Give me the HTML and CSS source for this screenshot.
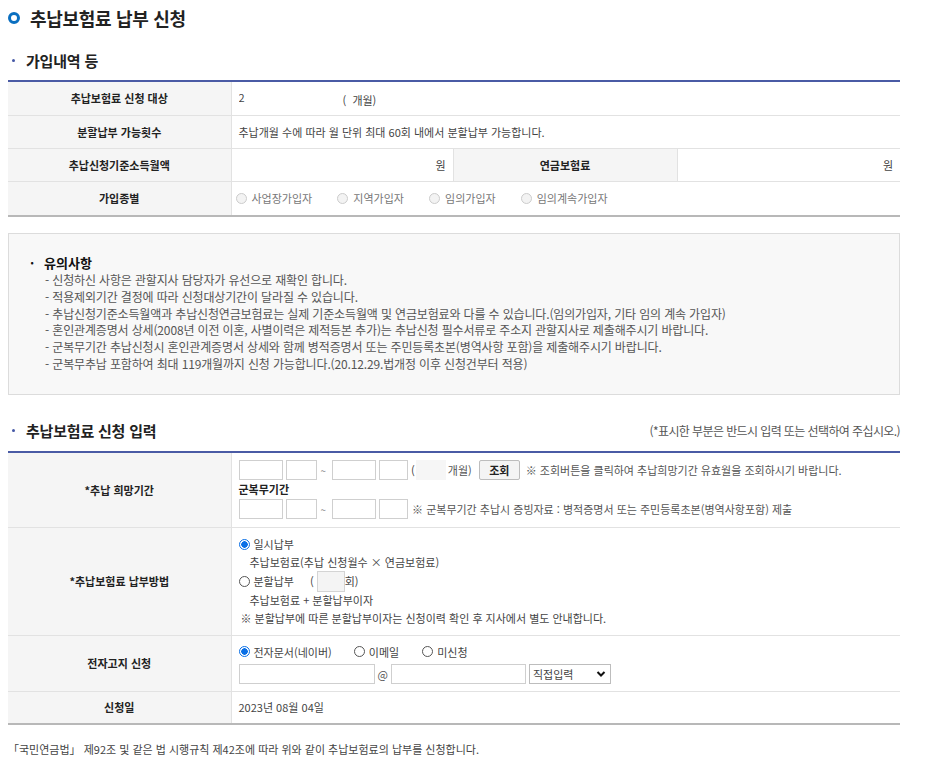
FILE: index.html
```html
<!DOCTYPE html>
<html lang="ko">
<head>
<meta charset="utf-8">
<title>추납보험료 납부 신청</title>
<link rel="stylesheet" href="styles.css">
</head>
<body>
<div class="page">
  <h1 class="title"><span class="ring"></span>추납보험료 납부 신청</h1>

  <h2 class="sec"><span class="dot"></span>가입내역 등</h2>
  <table class="grid t1">
    <colgroup><col class="c1"><col class="c2"><col class="c3"><col class="c4"></colgroup>
    <tr class="r34"><th>추납보험료 신청 대상</th><td colspan="3"><span class="mask">2</span><span class="gap1"></span>(&nbsp;&nbsp;개월)</td></tr>
    <tr class="r33"><th>분할납부 가능횟수</th><td colspan="3">추납개월 수에 따라 월 단위 최대 60회 내에서 분할납부 가능합니다.</td></tr>
    <tr class="r33"><th>추납신청기준소득월액</th><td class="right">원</td><th>연금보험료</th><td class="right">원</td></tr>
    <tr class="r35 last"><th>가입종별</th><td colspan="3">
      <span class="opt dim first"><span class="radio off"></span>사업장가입자</span>
      <span class="opt dim"><span class="radio off"></span>지역가입자</span>
      <span class="opt dim"><span class="radio off"></span>임의가입자</span>
      <span class="opt dim"><span class="radio off"></span>임의계속가입자</span>
    </td></tr>
  </table>

  <div class="notice">
    <div class="ntitle"><span class="ndot">·</span>유의사항</div>
    <ul class="nlist">
      <li>- 신청하신 사항은 관할지사 담당자가 유선으로 재확인 합니다.</li>
      <li>- 적용제외기간 결정에 따라 신청대상기간이 달라질 수 있습니다.</li>
      <li>- 추납신청기준소득월액과 추납신청연금보험료는 실제 기준소득월액 및 연금보험료와 다를 수 있습니다.(임의가입자, 기타 임의 계속 가입자)</li>
      <li>- 혼인관계증명서 상세(2008년 이전 이혼, 사별이력은 제적등본 추가)는 추납신청 필수서류로 주소지 관할지사로 제출해주시기 바랍니다.</li>
      <li>- 군복무기간 추납신청시 혼인관계증명서 상세와 함께 병적증명서 또는 주민등록초본(병역사항 포함)을 제출해주시기 바랍니다.</li>
      <li>- 군복무추납 포함하여 최대 119개월까지 신청 가능합니다.(20.12.29.법개정 이후 신청건부터 적용)</li>
    </ul>
  </div>

  <div class="sechead">
    <h2 class="sec"><span class="dot"></span>추납보험료 신청 입력</h2>
    <span class="req">(*표시한 부분은 반드시 입력 또는 선택하여 주십시오.)</span>
  </div>
  <table class="grid t2">
    <colgroup><col class="c1"><col></colgroup>
    <tr class="r73"><th>*추납 희망기간</th><td>
      <div class="line">
        <span class="inp w44"></span><span class="inp w31"></span><span class="tilde">~</span><span class="inp w44"></span><span class="inp w29"></span>
        <span class="paren">(</span><span class="graybox"></span><span class="mon">개월)</span>
        <span class="btn">조회</span>
        <span class="hint">※ 조회버튼을 클릭하여 추납희망기간 유효월을 조회하시기 바랍니다.</span>
      </div>
      <div class="sub">군복무기간</div>
      <div class="line">
        <span class="inp w44"></span><span class="inp w31"></span><span class="tilde">~</span><span class="inp w44"></span><span class="inp w29"></span>
        <span class="hint h2">※ 군복무기간 추납시 증빙자료 : 병적증명서 또는 주민등록초본(병역사항포함) 제출</span>
      </div>
    </td></tr>
    <tr class="r109"><th>*추납보험료 납부방법</th><td>
      <div class="pline"><span class="radio on"></span>일시납부</div>
      <div class="pline ind">추납보험료(추납 신청월수 × 연금보험료)</div>
      <div class="pline tall"><span class="radio blank"></span>분할납부<span class="paren2">(</span><span class="cntbox"></span>회)</div>
      <div class="pline ind">추납보험료 + 분할납부이자</div>
      <div class="pline note">※ 분할납부에 따른 분할납부이자는 신청이력 확인 후 지사에서 별도 안내합니다.</div>
    </td></tr>
    <tr class="r56"><th>전자고지 신청</th><td>
      <div class="eline">
        <span class="opt e1"><span class="radio on"></span>전자문서(네이버)</span>
        <span class="opt e2"><span class="radio blank"></span>이메일</span>
        <span class="opt"><span class="radio blank"></span>미신청</span>
      </div>
      <div class="mline">
        <span class="inp w136"></span><span class="at">@</span><span class="inp w135"></span>
        <span class="sel">직접입력<svg class="chev" width="10" height="8" viewBox="0 0 10 8"><path d="M1.5 2 L5 5.5 L8.5 2" fill="none" stroke="#111" stroke-width="2"/></svg></span>
      </div>
    </td></tr>
    <tr class="r33 last"><th>신청일</th><td>2023년 08월 04일</td></tr>
  </table>

  <p class="foot">「국민연금법」 제92조 및 같은 법 시행규칙 제42조에 따라 위와 같이 추납보험료의 납부를 신청합니다.</p>
</div>
</body>
</html>
```

FILE: styles.css
```css
* { box-sizing: border-box; }
body {
  margin: 8px;
  font-family: "Noto Sans CJK KR", "Noto Sans", sans-serif;
  font-size: 11px;
  color: #333;
  background: #fff;
}
.page { width: 892px; }

.title {
  display: flex;
  align-items: center;
  gap: 10px;
  margin: 0;
  height: 20px;
  font-size: 18px;
  font-weight: 700;
  color: #222;
  letter-spacing: -0.3px;
}
.ring {
  width: 12px;
  height: 12px;
  border: 3px solid #0a6fc0;
  border-radius: 50%;
}

.sec {
  display: flex;
  align-items: center;
  margin: 0;
  font-size: 15px;
  font-weight: 700;
  color: #222;
  letter-spacing: -0.2px;
}
.dot {
  width: 3px;
  height: 3px;
  border-radius: 50%;
  background: #4558a6;
  margin: 0 11px 0 4px;
}
.page > .sec { margin-top: 22px; height: 20px; }

.grid {
  width: 892px;
  border-collapse: collapse;
  table-layout: fixed;
  border-top: 2px solid #4a5ba5;
}
.t1 { margin-top: 10px; }
.c1 { width: 223px; }
.c2 { width: 222px; }
.c3 { width: 224px; }
.c4 { width: 223px; }
.grid th {
  background: #f5f5f5;
  font-weight: 700;
  color: #222;
  text-align: center;
  border-bottom: 1px solid #e2e2e2;
  border-right: 1px solid #e2e2e2;
  padding: 0;
}
.grid td {
  border-bottom: 1px solid #e2e2e2;
  padding: 0 7px;
  color: #444;
  vertical-align: middle;
}
.grid tr.last th, .grid tr.last td { border-bottom: 2px solid #b8b8b8; }
.r34 { height: 34px; }
.r35 { height: 35px; }
.r33 { height: 33px; }
.r73 { height: 75px; }
.r109 { height: 108px; }
.r56 { height: 56px; }
.right { text-align: right; border-right: 1px solid #e2e2e2; }
.grid td.right:last-child { border-right: 0; }
.mask { display: inline-block; width: 8px; overflow: hidden; }
.gap1 { display: inline-block; width: 96px; }

.opt { display: inline-flex; align-items: center; margin-right: 22px; }
.dim { color: #777; }
.first { margin-left: -3px; }
.radio {
  display: inline-block;
  width: 11px;
  height: 11px;
  border-radius: 50%;
  border: 1px solid #333;
  margin-right: 4px;
  flex: none;
}
.dim .radio { margin-right: 5px; }
.radio.off { border-color: #ccc; background: #f3f3f3; }
.radio.blank { border-color: #555; background: #fff; }
.radio.on {
  border: 1px solid #0a6fe6;
  background: radial-gradient(circle, #0a6fe6 0 3px, #fff 3.5px);
}

.notice {
  margin-top: 16px;
  height: 162px;
  background: #f8f8f8;
  border: 1px solid #dcdcdc;
  padding: 20px 0 0 21px;
  font-size: 12px;
}
.ntitle {
  font-size: 13px;
  font-weight: 700;
  color: #111;
  line-height: 18px;
}
.ndot { display: inline-block; width: 14px; font-weight: 700; }
.nlist {
  list-style: none;
  margin: 0;
  padding: 0 0 0 15px;
  line-height: 16.8px;
  color: #555;
  letter-spacing: -0.15px;
}

.sechead {
  display: flex;
  justify-content: space-between;
  align-items: center;
  margin-top: 25px;
  height: 20px;
}
.req { font-size: 12px; color: #555; letter-spacing: -0.6px; }
.t2 { margin-top: 11px; }

.line { display: flex; align-items: center; height: 20px; }
.inp {
  display: inline-block;
  height: 20px;
  border: 1px solid #cfcfcf;
  background: #fff;
  margin-right: 3px;
  flex: none;
}
.w44 { width: 44px; }
.w31 { width: 31px; }
.w29 { width: 29px; }
.w136 { width: 136px; }
.w135 { width: 135px; }
.tilde { margin: 0 6px 0 1px; font-size: 10px; color: #888; }
.graybox { display: inline-block; width: 30px; height: 20px; background: #f6f6f6; margin: 0 2px 0 1px; }
.mon { color: #555; }
.btn {
  display: inline-flex;
  align-items: center;
  justify-content: center;
  width: 41px;
  height: 20px;
  margin: 0 6px 0 7px;
  border: 1px solid #bdbdbd;
  border-radius: 2px;
  background: #f4f4f4;
  font-weight: 700;
  color: #222;
}
.hint { color: #555; }
.h2 { margin-left: 1px; }
.sub { font-weight: 700; color: #222; line-height: 19px; }

.pline { display: flex; align-items: center; height: 18px; color: #444; }
.pline.tall { height: 20px; }
.ind { padding-left: 11px; }
.note { padding-left: 2px; }
.paren2 { margin-left: 16px; }
.cntbox {
  display: inline-block;
  width: 28px;
  height: 21px;
  background: #f4f4f4;
  border: 1px solid #d4d4d4;
  margin-left: 3px;
}

.eline { display: flex; align-items: center; height: 18px; }
.e1 { margin-right: 22px; }
.e2 { margin-right: 23px; }
.mline { display: flex; align-items: center; margin-top: 3px; height: 20px; }
.at { margin: 0 3px 0 0; color: #555; }
.sel {
  display: inline-flex;
  align-items: center;
  justify-content: space-between;
  width: 82px;
  height: 20px;
  border: 1px solid #bdbdbd;
  padding: 0 4px 0 3px;
  color: #444;
}

.foot { margin: 16px 0 0; color: #444; }
```
